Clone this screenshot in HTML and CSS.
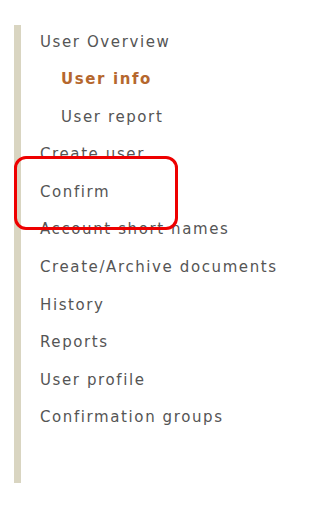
FILE: index.html
```html
<!DOCTYPE html>
<html>
<head>
<meta charset="utf-8">
<link rel="stylesheet" href="styles.css">
</head>
<body>
<div class="page">
  <nav class="sidebar">
    <ul class="menu">
      <li class="item">User Overview</li>
      <li class="item sub active">User info</li>
      <li class="item sub">User report</li>
      <li class="item">Create user</li>
      <li class="item">Confirm</li>
      <li class="item">Account short names</li>
      <li class="item">Create/Archive documents</li>
      <li class="item">History</li>
      <li class="item">Reports</li>
      <li class="item">User profile</li>
      <li class="item">Confirmation groups</li>
    </ul>
  </nav>
  <div class="highlight"></div>
</div>
</body>
</html>
```

FILE: styles.css
```css
html, body {
  margin: 0;
  padding: 0;
  background: #ffffff;
}

.page {
  position: relative;
  width: 329px;
  height: 513px;
  padding-top: 25px;
  box-sizing: border-box;
}

.sidebar {
  margin-left: 14px;
  border-left: 7px solid #d9d5c1;
  height: 458px;
  box-sizing: border-box;
}

.menu {
  list-style: none;
  margin: 0;
  padding: 0 0 0 19px;
  font-family: "DejaVu Sans", Verdana, sans-serif;
  font-size: 15px;
  letter-spacing: 1.6px;
  color: #555555;
}

.item {
  line-height: 20px;
  padding: 6.5px 0 11.1px;
  white-space: nowrap;
}

.sub {
  padding-left: 21px;
}

.active {
  font-weight: bold;
  color: #b5672e;
}

.highlight {
  position: absolute;
  left: 14px;
  top: 156px;
  width: 164px;
  height: 74px;
  box-sizing: border-box;
  border: 3px solid #ee0000;
  border-radius: 12px;
}
```
